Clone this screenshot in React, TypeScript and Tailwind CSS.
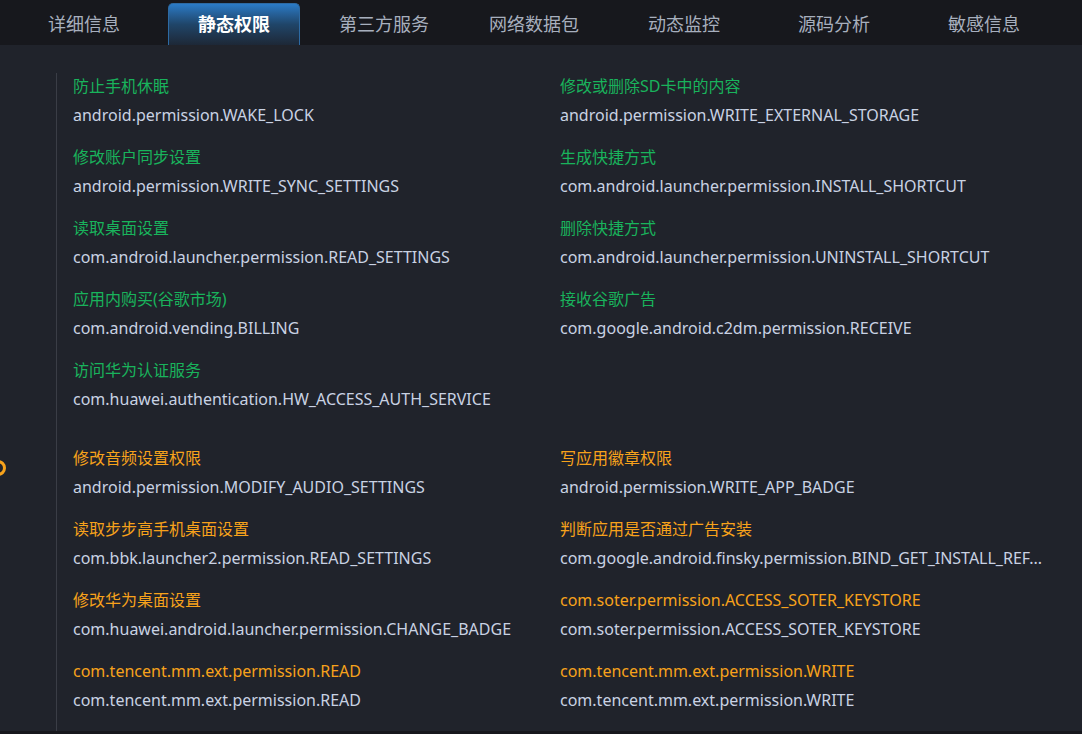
import React from "react";

const tabs = ["详细信息", "静态权限", "第三方服务", "网络数据包", "动态监控", "源码分析", "敏感信息"];

interface Perm {
  title: string;
  name: string;
}

const normal: Perm[] = [
  { title: "防止手机休眠", name: "android.permission.WAKE_LOCK" },
  { title: "修改或删除SD卡中的内容", name: "android.permission.WRITE_EXTERNAL_STORAGE" },
  { title: "修改账户同步设置", name: "android.permission.WRITE_SYNC_SETTINGS" },
  { title: "生成快捷方式", name: "com.android.launcher.permission.INSTALL_SHORTCUT" },
  { title: "读取桌面设置", name: "com.android.launcher.permission.READ_SETTINGS" },
  { title: "删除快捷方式", name: "com.android.launcher.permission.UNINSTALL_SHORTCUT" },
  { title: "应用内购买(谷歌市场)", name: "com.android.vending.BILLING" },
  { title: "接收谷歌广告", name: "com.google.android.c2dm.permission.RECEIVE" },
  { title: "访问华为认证服务", name: "com.huawei.authentication.HW_ACCESS_AUTH_SERVICE" },
];

const risky: Perm[] = [
  { title: "修改音频设置权限", name: "android.permission.MODIFY_AUDIO_SETTINGS" },
  { title: "写应用徽章权限", name: "android.permission.WRITE_APP_BADGE" },
  { title: "读取步步高手机桌面设置", name: "com.bbk.launcher2.permission.READ_SETTINGS" },
  { title: "判断应用是否通过广告安装", name: "com.google.android.finsky.permission.BIND_GET_INSTALL_REF..." },
  { title: "修改华为桌面设置", name: "com.huawei.android.launcher.permission.CHANGE_BADGE" },
  { title: "com.soter.permission.ACCESS_SOTER_KEYSTORE", name: "com.soter.permission.ACCESS_SOTER_KEYSTORE" },
  { title: "com.tencent.mm.ext.permission.READ", name: "com.tencent.mm.ext.permission.READ" },
  { title: "com.tencent.mm.ext.permission.WRITE", name: "com.tencent.mm.ext.permission.WRITE" },
];

function Item({ p, tone }: { p: Perm; tone: "green" | "orange" }) {
  return (
    <div className="mb-[14px] min-w-0">
      <div className={"h-7 leading-7 whitespace-nowrap " + (tone === "green" ? "text-[#19b35c]" : "text-[#f7a21b]")}>
        {p.title}
      </div>
      <div className="mt-px h-7 leading-7 whitespace-nowrap text-[#c9d2e3]">{p.name}</div>
    </div>
  );
}

export default function App() {
  return (
    <div
      className="w-[1082px] h-[734px] overflow-hidden bg-[#20232b] flex flex-col relative"
      style={{ fontFamily: '"Noto Sans", "Noto Sans CJK SC", sans-serif' }}
    >
      <div className="h-[45px] bg-[#17181d] flex items-end pl-[18px] gap-[18px] shrink-0">
        {tabs.map((t, i) =>
          i === 1 ? (
            <div
              key={t}
              className="w-[132px] h-[42px] rounded-t-[5px] border border-b-0 border-[#2d6aa3] bg-gradient-to-b from-[#2b7bc7] via-[#1f4569] to-[#1d2837] flex items-center justify-center text-white font-bold text-[18px]"
            >
              {t}
            </div>
          ) : (
            <div key={t} className="w-[132px] h-[42px] flex items-center justify-center text-[#a7afbd] text-[18px]">
              {t}
            </div>
          )
        )}
      </div>

      <div className="flex-1 ml-[56px] border-l border-[#3a3d46] mt-[28px] pl-[16px]">
        <div className="-mt-px grid grid-cols-2 w-[974px]">
          {normal.map((p) => (
            <Item key={p.name} p={p} tone="green" />
          ))}
        </div>
        <div className="mt-[17px] grid grid-cols-2 w-[974px]">
          {risky.map((p) => (
            <Item key={p.name + p.title} p={p} tone="orange" />
          ))}
        </div>
      </div>

      <div className="absolute left-[-10px] top-[460px] w-[16px] h-[16px] rounded-full border-[3px] border-[#f7a21b] bg-[#20232b]" />
      <div className="h-[3px] bg-[#17181d] shrink-0" />
    </div>
  );
}
